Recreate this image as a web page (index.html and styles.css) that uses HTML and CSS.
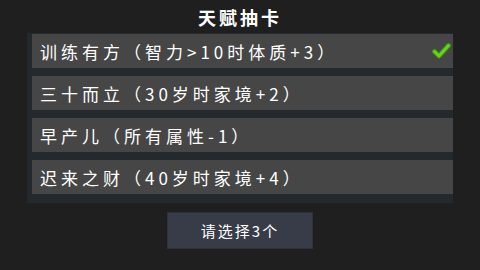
FILE: index.html
```html
<!DOCTYPE html>
<html lang="zh">
<head>
  <meta charset="UTF-8">
  <title>天赋抽卡</title>
  <link rel="stylesheet" href="styles.css">
</head>
<body>
  <div class="talent-screen">
    <div class="talent-title">天赋抽卡</div>
    <div class="talent-list">
      <div class="talent-item selected">
        <span class="talent-text">训练有方（智力&gt;10时体质+3）</span>
        <svg class="talent-check" width="19" height="16" viewBox="0 0 19 16">
          <polyline points="2.5,8.5 7,13 16.5,2.5" fill="none" stroke="#3c8f0e" stroke-width="5" stroke-linecap="round" stroke-linejoin="round"/>
          <polyline points="2.5,8.5 7,13 16.5,2.5" fill="none" stroke="#6bd021" stroke-width="3" stroke-linecap="round" stroke-linejoin="round"/>
        </svg>
      </div>
      <div class="talent-item">
        <span class="talent-text">三十而立（30岁时家境+2）</span>
      </div>
      <div class="talent-item">
        <span class="talent-text">早产儿（所有属性-1）</span>
      </div>
      <div class="talent-item">
        <span class="talent-text">迟来之财（40岁时家境+4）</span>
      </div>
    </div>
    <button class="pick-btn">请选择3个</button>
  </div>
</body>
</html>
```

FILE: styles.css
```css
body {
  margin: 0;
  padding: 0;
  background: #1f1f1f;
  color: #fff;
  font-family: "Noto Sans CJK SC", "Noto Sans", sans-serif;
}
.talent-screen {
  width: 480px;
  height: 270px;
  display: flex;
  flex-direction: column;
}
.talent-title {
  height: 33px;
  line-height: 35px;
  text-align: center;
  font-size: 18px;
  font-weight: bold;
  letter-spacing: 3px;
}
.talent-list {
  margin: 0 27px;
  padding: 1px 0 9px 5px;
  background: #24292e;
  display: flex;
  flex-direction: column;
  gap: 8px;
}
.talent-item {
  height: 34px;
  background: #464646;
  display: flex;
  align-items: center;
  justify-content: space-between;
  padding: 0 2px 0 8px;
}
.talent-text {
  font-size: 17px;
  letter-spacing: 4px;
  line-height: 1;
}
.talent-check {
  display: block;
}
.pick-btn {
  margin: 9px auto 0 auto;
  width: 146px;
  height: 37px;
  background: #373c48;
  border: 1px solid #2d3139;
  color: #fff;
  font-family: "Noto Sans CJK SC", "Noto Sans", sans-serif;
  font-size: 15px;
  letter-spacing: 2px;
  padding: 0;
}
```
